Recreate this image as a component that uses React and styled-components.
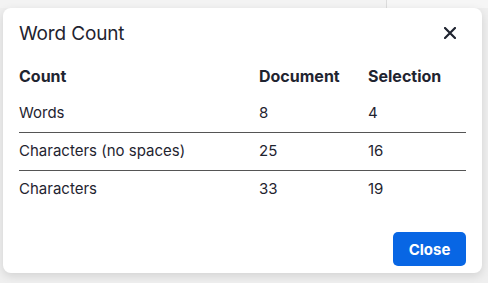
import React from "react";
import styled, { createGlobalStyle } from "styled-components";

const GlobalStyle = createGlobalStyle`
  html, body {
    margin: 0;
    padding: 0;
    background: #f1f1f1;
    font-family: Inter, "Noto Sans", "Liberation Sans", sans-serif;
    color: #1f2430;
  }
`;

const Page = styled.div`
  width: 488px;
  height: 283px;
  box-sizing: border-box;
  padding: 8px 6px 10px 3px;
  background: linear-gradient(to right, #f3f3f3 0 386px, #dcdcdc 386px 387px, #f6f6f6 387px);
  background-size: 100% 8px;
  background-repeat: no-repeat;
  background-color: #efefef;
`;

const Dialog = styled.div`
  width: 479px;
  height: 265px;
  box-sizing: border-box;
  background: #fff;
  border-radius: 8px;
  box-shadow: 0 3px 10px rgba(0, 0, 0, 0.12);
  display: flex;
  flex-direction: column;
  padding: 0 16px;
`;

const Header = styled.div`
  display: flex;
  align-items: center;
  justify-content: space-between;
  height: 50px;
`;

const Title = styled.h2`
  margin: 0;
  font-size: 19px;
  font-weight: 400;
  letter-spacing: -0.15px;
  color: #1f2430;
`;

const CloseIcon = styled.button`
  border: none;
  background: none;
  padding: 0;
  margin-right: 10px;
  display: flex;
  color: #1f2430;
  cursor: pointer;
`;

const Table = styled.table`
  width: 100%;
  border-collapse: collapse;
  font-size: 15px;
`;

const Th = styled.th`
  text-align: left;
  font-weight: 700;
  font-size: 16px;
  padding: 8px 0 9px;
  line-height: 20px;
  width: ${({ $w }) => $w || "auto"};
`;

const Row = styled.tr`
  border-bottom: ${({ $last }) => ($last ? "none" : "1px solid #555")};
`;

const Td = styled.td`
  padding: 8px 0 9px;
  line-height: 20px;
`;

const Footer = styled.div`
  margin-top: auto;
  display: flex;
  justify-content: flex-end;
  padding-bottom: 7px;
`;

const Button = styled.button`
  font-family: inherit;
  font-size: 15px;
  font-weight: 700;
  color: #fff;
  background: #0866e4;
  border: none;
  border-radius: 5px;
  width: 73px;
  height: 34px;
  cursor: pointer;
`;

const rows = [
  ["Words", 8, 4],
  ["Characters (no spaces)", 25, 16],
  ["Characters", 33, 19],
];

export default function App() {
  return (
    <>
      <GlobalStyle />
      <Page>
        <Dialog>
          <Header>
            <Title>Word Count</Title>
            <CloseIcon aria-label="Close">
              <svg width="12" height="12" viewBox="0 0 12 12">
                <path d="M1 1L11 11M11 1L1 11" stroke="currentColor" strokeWidth="2.2" strokeLinecap="round" />
              </svg>
            </CloseIcon>
          </Header>
          <Table>
            <thead>
              <tr>
                <Th $w="240px">Count</Th>
                <Th $w="109px">Document</Th>
                <Th>Selection</Th>
              </tr>
            </thead>
            <tbody>
              {rows.map(([label, doc, sel], i) => (
                <Row key={label} $last={i === rows.length - 1}>
                  <Td>{label}</Td>
                  <Td>{doc}</Td>
                  <Td>{sel}</Td>
                </Row>
              ))}
            </tbody>
          </Table>
          <Footer>
            <Button>Close</Button>
          </Footer>
        </Dialog>
      </Page>
    </>
  );
}
